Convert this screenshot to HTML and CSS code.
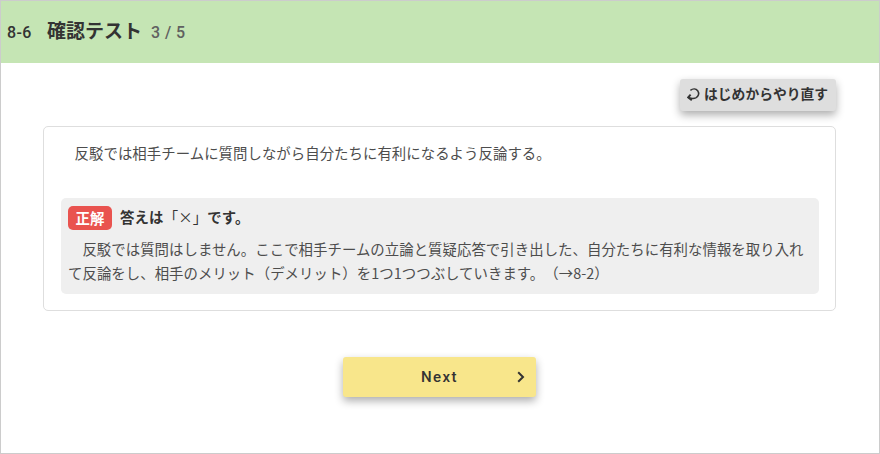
FILE: index.html
```
<!DOCTYPE html>
<html lang="ja">
<head>
    <meta charset="UTF-8">
    <meta name="viewport" content="width=device-width, initial-scale=1.0">
    <title>8-6 確認テスト</title>
    <link rel="stylesheet" href="styles.css">
</head>
<body>
    <header>
        <span class="chapter">8-6</span>
        <h1>確認テスト</h1>
        <span class="count">3 / 5</span>
    </header>
    <main>
        <div class="tools">
            <button type="button" class="restart">
                <svg width="13" height="13" viewBox="0 0 13 13" fill="none" stroke="#333" stroke-width="1.5">
                    <path d="M3.4 2.4C6 .3 9 .6 10.7 2.7C12.6 5.3 11.5 8.7 8.8 9.9C6.8 10.7 4.5 10.6 1.8 9.6"/>
                    <path d="M3.6 6.6L1.2 9.4L4.8 12.2" stroke-width="1.9"/>
                </svg>
                <span>はじめからやり直す</span>
            </button>
        </div>
        <section class="card">
            <p class="question">反駁では相手チームに質問しながら自分たちに有利になるよう反論する。</p>
            <div class="answer">
                <div class="result">
                    <span class="badge">正解</span>
                    <strong>答えは<span class="mark">「×」</span>です。</strong>
                </div>
                <p class="comment">反駁では質問はしません。ここで相手チームの立論と質疑応答で引き出した、自分たちに有利な情報を取り入れて反論をし、相手のメリット（デメリット）を1つ1つつぶしていきます。（→8-2）</p>
            </div>
        </section>
        <button type="button" class="next">
            <span>Next</span>
            <svg width="8" height="12" viewBox="0 0 8 12" fill="none" stroke="#333" stroke-width="2">
                <path d="M1.2 1.2L6 6L1.2 10.8"/>
            </svg>
        </button>
    </main>
</body>
</html>
```

FILE: styles.css
```
* {
    box-sizing: border-box;
}
body {
    font-family: "Noto Sans CJK JP", sans-serif;
    font-size: 14.4px;
    letter-spacing: 0.05px;
    text-spacing-trim: space-all;
    color: #4d4d4d;
    margin: 0;
    height: 454px;
    border: 1px solid #ccc;
    background: #fff;
    overflow: hidden;
}
header {
    display: flex;
    align-items: baseline;
    height: 62px;
    padding: 13px 6px 0;
    line-height: 32px;
    background: #c5e5b4;
}
.chapter {
    width: 40px;
    font-family: Roboto, sans-serif;
    font-size: 16px;
    font-weight: 500;
    color: #333;
    letter-spacing: 0.4px;
}
h1 {
    margin: 0 9px 0 0;
    font-size: 19px;
    font-weight: 700;
    line-height: 32px;
    letter-spacing: 0;
    color: #333;
}
.count {
    font-family: Roboto, sans-serif;
    font-size: 16px;
    font-weight: 500;
    color: #606060;
    letter-spacing: 0.4px;
}
main {
    padding: 16px 43px 0 42px;
}
button {
    display: flex;
    align-items: center;
    border: none;
    border-radius: 3px;
    padding: 0;
    font-family: inherit;
    font-size: 14.4px;
    font-weight: 500;
    color: #333;
    box-shadow: 0 4px 9px rgba(0,0,0,0.32);
    cursor: pointer;
}
.tools {
    display: flex;
    justify-content: flex-end;
}
.restart {
    width: 156px;
    height: 32px;
    padding: 0 7px;
    gap: 4px;
    font-size: 13.8px;
    font-weight: 700;
    white-space: nowrap;
    background: #dedede;
}
.restart span {
    margin-top: -5px;
}
.restart svg {
    margin-top: -2px;
}
.card {
    height: 185px;
    margin-top: 15px;
    padding: 14px 16px 0 17px;
    border: 1px solid #dedede;
    border-radius: 5px;
}
p {
    margin: 0;
    line-height: 24px;
    text-indent: 1em;
}
.question {
    height: 57px;
    text-indent: 13.6px;
}
.answer {
    height: 96px;
    padding: 8px 7px 0;
    border-radius: 5px;
    background: #efefef;
}
.result {
    display: flex;
    align-items: center;
    gap: 8px;
    height: 24px;
    margin-bottom: 7px;
}
.badge {
    width: 44px;
    border-radius: 5px;
    line-height: 24px;
    text-align: center;
    font-weight: 700;
    color: #fff;
    background: #e9534f;
}
strong {
    margin-top: -3px;
    font-weight: 700;
    letter-spacing: 0.15px;
    color: #333;
}
.mark {
    font-weight: 400;
}
.next {
    position: relative;
    justify-content: center;
    width: 193px;
    height: 40px;
    margin: 46px auto 0;
    font-family: Roboto, sans-serif;
    font-size: 15px;
    letter-spacing: 1.4px;
    background: #f8e68b;
}
.next span {
    margin-top: -1px;
}
.next svg {
    position: absolute;
    right: 11px;
    top: 14px;
}
```
